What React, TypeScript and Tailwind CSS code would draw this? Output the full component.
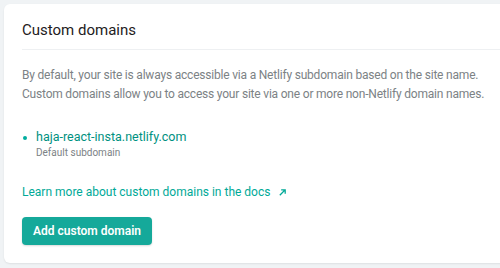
import React from 'react';

const App: React.FC = () => {
    return (
        <div className="w-[500px] h-[268px] overflow-hidden bg-[#f0f3f5] pt-[4px] pl-[4px]" style={{ fontFamily: 'Roboto, "Noto Sans", sans-serif' }}>
            <div className="w-[520px] h-[259px] bg-white rounded-[6px] shadow-[0_1px_2px_rgba(0,0,0,0.08)] pl-[18px]">
                <div className="pt-[17px] pb-[10px] border-b border-[#eef0f2]">
                    <h2 className="text-[15px] leading-[18px] text-[#1e2022] font-normal">Custom domains</h2>
                </div>
                <p className="mt-[16px] text-[12px] leading-[19px] tracking-[-0.2px] text-[#7c8285] whitespace-nowrap">
                    By default, your site is always accessible via a Netlify subdomain based on the site name.
                    <br />
                    Custom domains allow you to access your site via one or more non-Netlify domain names.
                </p>
                <ul className="mt-[25px]">
                    <li className="flex items-start">
                        <span className="w-[4px] h-[4px] rounded-full bg-[#00ad9f] mt-[7px] ml-[1px] mr-[9px]" />
                        <div>
                            <p className="text-[12.5px] leading-[16px] text-[#00917f]">haja-react-insta.netlify.com</p>
                            <p className="text-[10px] leading-[16px] text-[#7c8285]">Default subdomain</p>
                        </div>
                    </li>
                </ul>
                <a className="mt-[23px] flex items-center text-[12px] leading-[16px] text-[#00a997]">
                    Learn more about custom domains in the docs
                    <svg className="ml-[8px]" width="9" height="9" viewBox="0 0 10 10" fill="none" stroke="#00a997" strokeWidth="1.4">
                        <path d="M2 8 L8 2 M3.5 2 H8 V6.5" />
                    </svg>
                </a>
                <button className="mt-[17px] h-[28px] w-[130px] rounded-[4px] bg-[#15a99a] text-white text-[12px] font-semibold shadow-[0_1px_2px_rgba(0,0,0,0.15)]">
                    Add custom domain
                </button>
            </div>
        </div>
    );
};

export default App;
